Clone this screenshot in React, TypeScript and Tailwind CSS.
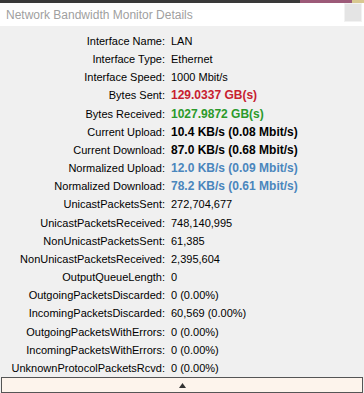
import { Fragment } from 'react';

type Row = { label: string; value: string; cls?: string };

const rows: Row[] = [
  { label: 'Interface Name:', value: 'LAN' },
  { label: 'Interface Type:', value: 'Ethernet' },
  { label: 'Interface Speed:', value: '1000 Mbit/s' },
  { label: 'Bytes Sent:', value: '129.0337 GB(s)', cls: 'text-[12px] font-bold text-[#c8202f]' },
  { label: 'Bytes Received:', value: '1027.9872 GB(s)', cls: 'text-[12px] font-bold text-[#2b9a2b]' },
  { label: 'Current Upload:', value: '10.4 KB/s (0.08 Mbit/s)', cls: 'text-[12px] font-bold text-black' },
  { label: 'Current Download:', value: '87.0 KB/s (0.68 Mbit/s)', cls: 'text-[12px] font-bold text-black' },
  { label: 'Normalized Upload:', value: '12.0 KB/s (0.09 Mbit/s)', cls: 'text-[12px] font-bold text-[#4a86bd]' },
  { label: 'Normalized Download:', value: '78.2 KB/s (0.61 Mbit/s)', cls: 'text-[12px] font-bold text-[#4a86bd]' },
  { label: 'UnicastPacketsSent:', value: '272,704,677' },
  { label: 'UnicastPacketsReceived:', value: '748,140,995' },
  { label: 'NonUnicastPacketsSent:', value: '61,385' },
  { label: 'NonUnicastPacketsReceived:', value: '2,395,604' },
  { label: 'OutputQueueLength:', value: '0' },
  { label: 'OutgoingPacketsDiscarded:', value: '0 (0.00%)' },
  { label: 'IncomingPacketsDiscarded:', value: '60,569 (0.00%)' },
  { label: 'OutgoingPacketsWithErrors:', value: '0 (0.00%)' },
  { label: 'IncomingPacketsWithErrors:', value: '0 (0.00%)' },
  { label: 'UnknownProtocolPacketsRcvd:', value: '0 (0.00%)' },
];

export default function App() {
  return (
    <div className="w-[364px] h-[393px] overflow-hidden flex flex-col bg-[#f0f0f0] text-black" style={{ fontFamily: '"Liberation Sans", Arial, sans-serif' }}>
      {/* window top edge */}
      <div className="h-[3px] flex shrink-0">
        <div className="flex-1 bg-[#3a3a3a]" />
        <div className="w-[52px] bg-[#9c5a78]" />
        <div className="w-[12px] bg-[#d8c890]" />
      </div>

      {/* title bar */}
      <div className="h-[23px] shrink-0 bg-white flex items-center justify-between pl-[6px] pr-[2px]">
        <span className="text-[12px] text-[#a0a0a0] leading-none">Network Bandwidth Monitor Details</span>
        <div className="w-[18px] h-[19px] bg-[#e4e4e4] border border-[#f2f2f2] self-start" />
      </div>

      {/* details grid */}
      <div className="grid grid-cols-[165px_1fr] gap-x-[6px] pt-[6px] text-[11px] leading-[18px] flex-1">
        {rows.map((r) => (
          <Fragment key={r.label}>
            <div className="text-right whitespace-nowrap">{r.label}</div>
            <div className={`whitespace-nowrap ${r.cls ?? ''}`}>{r.value}</div>
          </Fragment>
        ))}
      </div>

      {/* expander bar */}
      <div className="h-[16px] mx-[1px] shrink-0 border border-[#555] bg-[#fdf4ec] flex items-center justify-center">
        <svg width="7" height="5" viewBox="0 0 7 5">
          <polygon points="3.5,0 7,5 0,5" fill="#333" />
        </svg>
      </div>
    </div>
  );
}
